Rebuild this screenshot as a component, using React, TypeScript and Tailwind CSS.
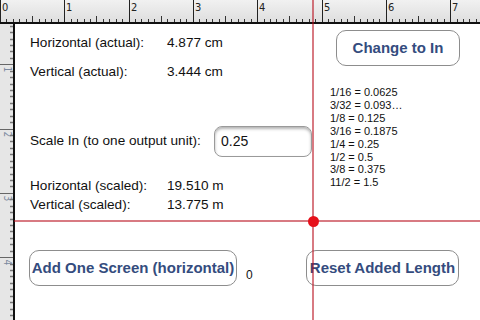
const UNIT = 64.3;
const STEP = UNIT / 10;

function TopRuler() {
  const ticks: JSX.Element[] = [];
  for (let i = 1; i * STEP < 480; i++) {
    const x = Math.round(i * STEP) + 0.5;
    if (i % 10 === 0) continue;
    const h = i % 5 === 0 ? 6 : 3;
    ticks.push(<line key={i} x1={x} x2={x} y1={22 - h} y2={22} stroke="#333" strokeWidth={1} />);
  }
  const majors = [0, 1, 2, 3, 4, 5, 6, 7];
  return (
    <svg width="480" height="24" className="block">
      <defs>
        <linearGradient id="rt" x1="0" y1="0" x2="0" y2="1">
          <stop offset="0" stopColor="#f1f1f1" />
          <stop offset="1" stopColor="#dedede" />
        </linearGradient>
      </defs>
      <rect width="480" height="22" fill="url(#rt)" />
      {ticks}
      {majors.map((m) => {
        const x = Math.round(m * UNIT) + 0.5;
        return (
          <g key={m}>
            <line x1={x} x2={x} y1={0} y2={22} stroke="#222" strokeWidth={1} />
            <text x={x + 1.5} y={11} fontSize="11" fill="#222" fontFamily="'DejaVu Sans Condensed','DejaVu Sans',sans-serif">
              {m}
            </text>
          </g>
        );
      })}
      <rect y="22" width="480" height="2" fill="#111" />
    </svg>
  );
}

function LeftRuler() {
  const ticks: JSX.Element[] = [];
  for (let i = 4; i * STEP < 318; i++) {
    const y = Math.round(i * STEP - 24) + 0.5;
    if (i % 10 === 0) {
      ticks.push(
        <g key={i}>
          <line x1={0} x2={13} y1={y} y2={y} stroke="#666" strokeWidth={1} />
          <text
            x={0}
            y={0}
            fontSize="10"
            fill="#7c8aa0"
            fontFamily="'DejaVu Sans Condensed','DejaVu Sans',sans-serif"
            transform={`translate(4 ${y + 2}) rotate(90)`}
          >
            {i / 10}
          </text>
        </g>
      );
    } else {
      ticks.push(<line key={i} x1={10} x2={13} y1={y} y2={y} stroke="#777" strokeWidth={1.5} />);
    }
  }
  return (
    <svg width="15" height="296" className="block shrink-0">
      <rect width="13" height="296" fill="#e6e6e6" />
      {ticks}
      <rect x="13" width="2" height="296" fill="#111" />
    </svg>
  );
}

function Row({ label, value, top }: { label: string; value: string; top: string }) {
  return (
    <div className={`flex h-[16px] items-center ${top}`}>
      <span className="w-[137px] shrink-0">{label}</span>
      <span>{value}</span>
    </div>
  );
}

const fractions: [string, string][] = [
  ["1/16 = 0.0625", "h-[13px]"],
  ["3/32 = 0.093…", "h-[13px]"],
  ["1/8 = 0.125", "h-[13px]"],
  ["3/16 = 0.1875", "h-[12px]"],
  ["1/4 = 0.25", "h-[15px]"],
  ["1/2 = 0.5", "h-[11px]"],
  ["3/8 = 0.375", "h-[13px]"],
  ["11/2 = 1.5", "h-[13px]"],
];

const btn =
  "flex h-[36px] items-center justify-center whitespace-nowrap rounded-[10px] border border-[#8d8d8d] bg-white text-[15px] font-bold text-[#344c7e]";

export default function App() {
  return (
    <div className="relative h-[320px] w-[480px] overflow-hidden bg-white font-['Liberation_Sans',Arial,sans-serif] text-[13.6px] text-[#111]">
      <TopRuler />
      <div className="flex h-[296px]">
        <LeftRuler />
        <div className="flex flex-1 flex-col">
          <div className="flex h-[226px]">
            <div className="flex w-[298px] flex-col pl-[15px] pt-[11px]">
              <Row label="Horizontal (actual):" value="4.877 cm" top="" />
              <Row label="Vertical (actual):" value="3.444 cm" top="mt-[13px]" />
              <div className="mt-[46px] flex h-[31px] items-center">
                <span className="w-[184px] shrink-0 whitespace-nowrap">Scale In (to one output unit):</span>
                <div className="flex h-[31px] w-[98px] items-center rounded-[8px] border border-[#9a9a9a] pl-[6px] text-[14px] shadow-[inset_0_2px_3px_rgba(0,0,0,0.3)]">
                  0.25
                </div>
              </div>
              <div className="mt-[21px] flex h-[16px] items-center">
                <span className="w-[137px] shrink-0">Horizontal (scaled):</span>
                <span>19.510 m</span>
              </div>
              <div className="mt-[3px] flex h-[16px] items-center">
                <span className="w-[137px] shrink-0">Vertical (scaled):</span>
                <span>13.775 m</span>
              </div>
            </div>
            <div className="flex flex-col pt-[6px]">
              <div className={`${btn} ml-[23px] w-[124px]`}>Change to In</div>
              <div className="ml-[17px] mt-[20px] flex flex-col text-[11px] leading-none">
                {fractions.map(([t, h]) => (
                  <div key={t} className={`${h} flex items-center whitespace-nowrap`}>
                    {t}
                  </div>
                ))}
              </div>
            </div>
          </div>
          <div className="flex items-start">
            <div className={`${btn} ml-[14px] w-[208px]`}>Add One Screen (horizontal)</div>
            <span className="ml-[9px] mt-[16px] text-[12px]">0</span>
            <div className={`${btn} ml-auto mr-[21px] w-[153px]`}>Reset Added Length</div>
          </div>
        </div>
      </div>
      <div className="absolute left-[312px] top-0 h-[320px] w-[2px] bg-[#b80c1c]/55" />
      <div className="absolute left-[14px] top-[220px] h-[2px] w-[466px] bg-[#b80c1c]/55" />
      <div className="absolute left-[308px] top-[216px] h-[11px] w-[11px] rounded-full bg-[#e6101a]" />
    </div>
  );
}
